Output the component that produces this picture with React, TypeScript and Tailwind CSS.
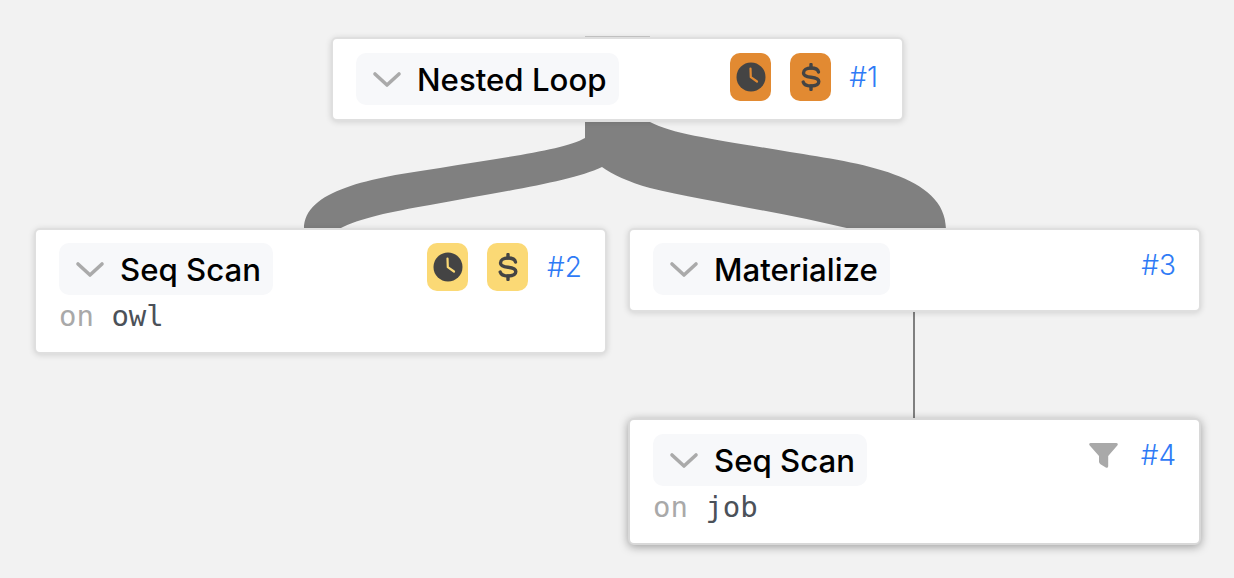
const Chevron = () => (
  <svg width="30" height="17" viewBox="0 0 30 17" fill="none" className="shrink-0">
    <path d="M3 3 L15 14 L27 3" stroke="#aaaaaa" strokeWidth="3.6" strokeLinecap="round" strokeLinejoin="round" />
  </svg>
);

const Badge = ({ color, children }: { color: string; children: React.ReactNode }) => (
  <span className={`flex h-[48px] w-[41px] items-center justify-center rounded-[10px] ${color}`}>{children}</span>
);

const ClockIcon = ({ hand }: { hand: string }) => (
  <svg width="30" height="30" viewBox="0 0 30 30">
    <circle cx="15" cy="15" r="14.5" fill="#444444" />
    <path d="M14.5 6.5 L14.8 15.2 L21 19.5" fill="none" stroke={hand} strokeWidth="2.2" strokeLinecap="round" strokeLinejoin="round" />
  </svg>
);

const DollarIcon = () => (
  <svg width="20" height="28" viewBox="0 0 20 28" fill="none" stroke="#444444" strokeWidth="3.4" strokeLinecap="round">
    <path d="M10 1.5 V5 M10 23 V26.5" />
    <path d="M17.5 9 C17 6.5 14.5 5 10 5 C5.5 5 2.5 7 2.5 10 C2.5 13 5.5 13.8 10 14.2 C14.5 14.6 17.8 15.5 17.8 18.6 C17.8 21.5 14.5 23 10 23 C5.5 23 3 21.5 2.2 19" strokeLinejoin="round" />
  </svg>
);

const FilterIcon = () => (
  <svg width="29" height="25" viewBox="0 0 29 25" fill="#a9a9a9">
    <path d="M1.5 0 H27.5 Q29.5 0.3 28.5 2.2 L19.2 13 V23.3 Q18.8 25.5 16.8 24.5 L11.5 21.2 Q10 20.3 10 18.8 V13 L0.5 2.2 Q-0.5 0.3 1.5 0 Z" />
  </svg>
);

const Icons = ({ color, hand }: { color: string; hand: string }) => (
  <>
    <Badge color={color}>
      <ClockIcon hand={hand} />
    </Badge>
    <Badge color={color}>
      <DollarIcon />
    </Badge>
  </>
);

const Title = ({ children }: { children: string }) => (
  <div className="flex h-[52px] items-center gap-[15px] rounded-[10px] bg-[#f7f8fa] pr-[12px] pl-[16px] text-[31.2px] font-medium text-black">
    <Chevron />
    <span className="pt-[2px]">{children}</span>
  </div>
);

const NodeId = ({ children }: { children: string }) => (
  <span className="text-[28px] leading-[34px] font-light text-[#2f7bf6]">{children}</span>
);

const Relation = ({ name }: { name: string }) => (
  <div className="mt-[5px] font-['DejaVu_Sans_Mono',monospace] text-[29px] leading-[32px] text-[#a9a9a9]">
    on <span className="text-[#4b5159]">{name}</span>
  </div>
);

export default function App() {
  return (
    <div className="relative h-[578px] w-[1234px] overflow-hidden bg-[#f2f2f2] font-['Inter',sans-serif]">
      <svg width="1234" height="578" viewBox="0 0 1234 578" className="absolute top-0 left-0">
        <path
          d="M585 122 L650 122 C675 135 720 140 790 152 C860 163 946 175 946 229 L851 229 C780 212 700 200 650 188 C628 182 612 174 602 167 C570 182 500 192 430 205 C390 212 360 218 339 229 L304 229 C304 190 370 178 440 168 C500 158 565 150 585 138 Z"
          fill="#808080"
        />
        <rect x="585" y="36" width="65" height="1" fill="#c9c9c9" />
        <rect x="913" y="310" width="2" height="110" fill="#808080" />
      </svg>

      <section className="absolute top-[37px] left-[331px] flex h-[84px] w-[573px] items-start rounded-[6px] border-2 border-[#dfdfdf] bg-white pt-[14px] pr-[24px] pl-[23px] shadow-[0_1px_6px_rgba(0,0,0,0.14)]">
        <Title>Nested Loop</Title>
        <div className="ml-auto flex items-center gap-[19px]">
          <Icons color="bg-[#e28a32]" hand="#e28a32" />
          <span className="-ml-px">
            <NodeId>#1</NodeId>
          </span>
        </div>
      </section>

      <section className="absolute top-[228px] left-[34px] h-[126px] w-[573px] rounded-[6px] border-2 border-[#dfdfdf] bg-white pt-[13px] pr-[23px] pl-[23px] shadow-[0_1px_6px_rgba(0,0,0,0.14)]">
        <div className="flex items-start">
          <Title>Seq Scan</Title>
          <div className="ml-auto flex items-center gap-[19px]">
            <Icons color="bg-[#fbd975]" hand="#fbd975" />
            <NodeId>#2</NodeId>
          </div>
        </div>
        <Relation name="owl" />
      </section>

      <section className="absolute top-[228px] left-[628px] flex h-[84px] w-[573px] items-start rounded-[6px] border-2 border-[#dfdfdf] bg-white pt-[13px] pr-[23px] pl-[23px] shadow-[0_1px_6px_rgba(0,0,0,0.14)]">
        <Title>Materialize</Title>
        <span className="mt-[5px] ml-auto">
          <NodeId>#3</NodeId>
        </span>
      </section>

      <section className="absolute top-[418px] left-[628px] h-[127px] w-[573px] rounded-[6px] border-2 border-[#d8d8d8] bg-white pt-[14px] pr-[23px] pl-[23px] shadow-[0_2px_10px_rgba(0,0,0,0.35)]">
        <div className="flex items-start">
          <Title>Seq Scan</Title>
          <div className="mt-[4px] ml-auto flex items-center gap-[23px]">
            <FilterIcon />
            <NodeId>#4</NodeId>
          </div>
        </div>
        <Relation name="job" />
      </section>
    </div>
  );
}
